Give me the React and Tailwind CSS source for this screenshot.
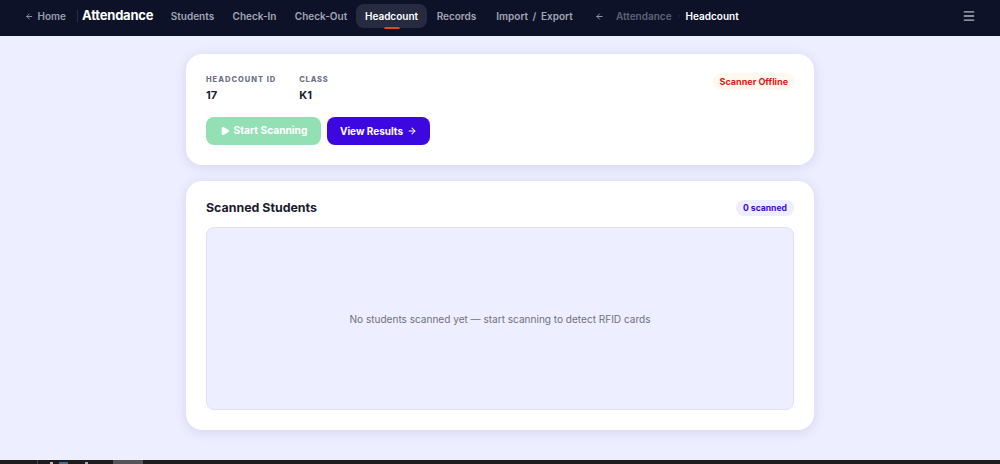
import React from 'react';
import { ArrowLeft, ArrowRight, ChevronRight, Menu, Play } from 'lucide-react';

const navItems = [
  { label: 'Students', width: 'w-[61px]' },
  { label: 'Check-In', width: 'w-[63px]' },
  { label: 'Check-Out', width: 'w-[70px]' },
  { label: 'Headcount', width: 'w-[71px]' },
  { label: 'Records', width: 'w-[59px]' },
  { label: 'Import / Export', width: 'w-[97px]' },
];

const App = () => {
  return (
    <div className="flex h-[464px] w-full flex-col overflow-hidden bg-[#edeeff] font-['Inter',sans-serif]">
      {/* Top nav */}
      <header className="flex h-9 shrink-0 items-center bg-[#0e1229] pb-1 pl-[25px] pr-[25px]">
        <a className="flex w-[41px] items-center gap-[4px] whitespace-nowrap text-[10px] font-semibold text-[#9a9dac]">
          <ArrowLeft size={9} strokeWidth={2.5} />
          Home
        </a>
        <span className="ml-[11px] h-3 w-px bg-[#2a2e45]"></span>
        <span className="ml-[4px] w-[71px] whitespace-nowrap text-[13px] font-bold tracking-[-0.2px] text-white">Attendance</span>
        <nav className="ml-[9px] flex items-center">
          {navItems.map((item) => {
            const active = item.label === 'Headcount';
            return (
              <div
                key={item.label}
                className={`relative flex h-6 items-center justify-center whitespace-nowrap rounded-lg text-[10px] font-semibold [word-spacing:2px] ${item.width} ${active ? 'bg-[#272b3f] text-white' : 'text-[#a3a5b3]'}`}
              >
                {item.label}
                {active && <span className="absolute bottom-[-1px] left-1/2 h-[2px] w-[15px] -translate-x-1/2 bg-[#e0481a]"></span>}
              </div>
            );
          })}
        </nav>
        <ArrowLeft size={9} strokeWidth={2.5} className="ml-[12px] text-[#9a9dac]" />
        <span className="ml-[12px] whitespace-nowrap text-[10px] font-semibold text-[#5f6277]">Attendance</span>
        <ChevronRight size={6} className="ml-[4px] text-[#3f4257]" />
        <span className="ml-[4px] whitespace-nowrap text-[10px] font-semibold text-white">Headcount</span>
        <Menu size={14} strokeWidth={2.4} className="ml-auto mr-[-1px] text-[#b5b7c4]" />
      </header>

      <main className="flex flex-1 flex-col items-center gap-4 pt-[18px]">
        {/* Session card */}
        <section className="flex h-[111px] w-[628px] flex-col rounded-2xl bg-white px-5 pt-[21px] shadow-[0_2px_12px_rgba(60,60,140,0.14)]">
          <div className="flex items-start justify-between">
            <div className="flex gap-[23px]">
              <div>
                <div className="text-[7.5px] font-extrabold uppercase leading-[10px] tracking-[1px] text-[#6b7186]">Headcount ID</div>
                <div className="mt-[3px] text-[11px] font-bold leading-[14px] text-[#1a1c30]">17</div>
              </div>
              <div>
                <div className="text-[7.5px] font-extrabold uppercase leading-[10px] tracking-[0.8px] text-[#6b7186]">Class</div>
                <div className="mt-[3px] text-[11px] font-bold leading-[14px] text-[#1a1c30]">K1</div>
              </div>
            </div>
            <span className="-mt-[2px] mr-[-1px] rounded-full bg-[#fff8ee] px-[7px] py-[2.5px] text-[9px] font-bold leading-[12px] text-[#dc1414]">Scanner Offline</span>
          </div>
          <div className="mt-[15px] flex gap-[6px]">
            <button className="flex h-7 w-[115px] items-center justify-center gap-[4px] rounded-lg bg-[#93e0b4] text-[10.2px] font-bold text-white">
              <Play size={10} fill="currentColor" />
              Start Scanning
            </button>
            <button className="flex h-7 w-[103px] items-center justify-center gap-[4px] rounded-lg bg-[#3d07e0] text-[10px] font-bold text-white">
              View Results
              <ArrowRight size={10} strokeWidth={2.5} />
            </button>
          </div>
        </section>

        {/* Scanned students */}
        <section className="flex h-[249px] w-[628px] flex-col rounded-2xl bg-white px-5 pb-5 pt-5 shadow-[0_2px_12px_rgba(60,60,140,0.14)]">
          <div className="flex h-[14px] items-center justify-between">
            <h2 className="text-[12.4px] font-bold text-[#1a1c30]">Scanned Students</h2>
            <span className="rounded-full bg-[#edeeff] px-[7px] py-[2px] text-[8.6px] font-bold leading-[12px] text-[#3d07e0]">0 scanned</span>
          </div>
          <div className="mt-[12px] flex flex-1 items-center justify-center rounded-lg border border-[#dfe2f5] bg-[#edeeff] pt-[2px] text-[10.05px] text-[#6c7284]">
            No students scanned yet — start scanning to detect RFID cards
          </div>
        </section>
      </main>

      {/* Strip of the taskbar at the bottom */}
      <footer className="flex h-1 shrink-0 bg-[#1c1c1c]">
        <span className="ml-[37px] h-1 w-px bg-[#444444]"></span>
        <span className="ml-[12px] mt-[2px] h-[2px] w-[3px] bg-[#bbbbbb]"></span>
        <span className="ml-[6px] mt-[2px] h-[2px] w-[9px] bg-[#4a6a94]"></span>
        <span className="ml-[17px] mt-[2px] h-[2px] w-[3px] bg-[#aaaaaa]"></span>
        <span className="ml-[25px] h-1 w-[30px] bg-[#555555]"></span>
      </footer>
    </div>
  );
};

export default App;
